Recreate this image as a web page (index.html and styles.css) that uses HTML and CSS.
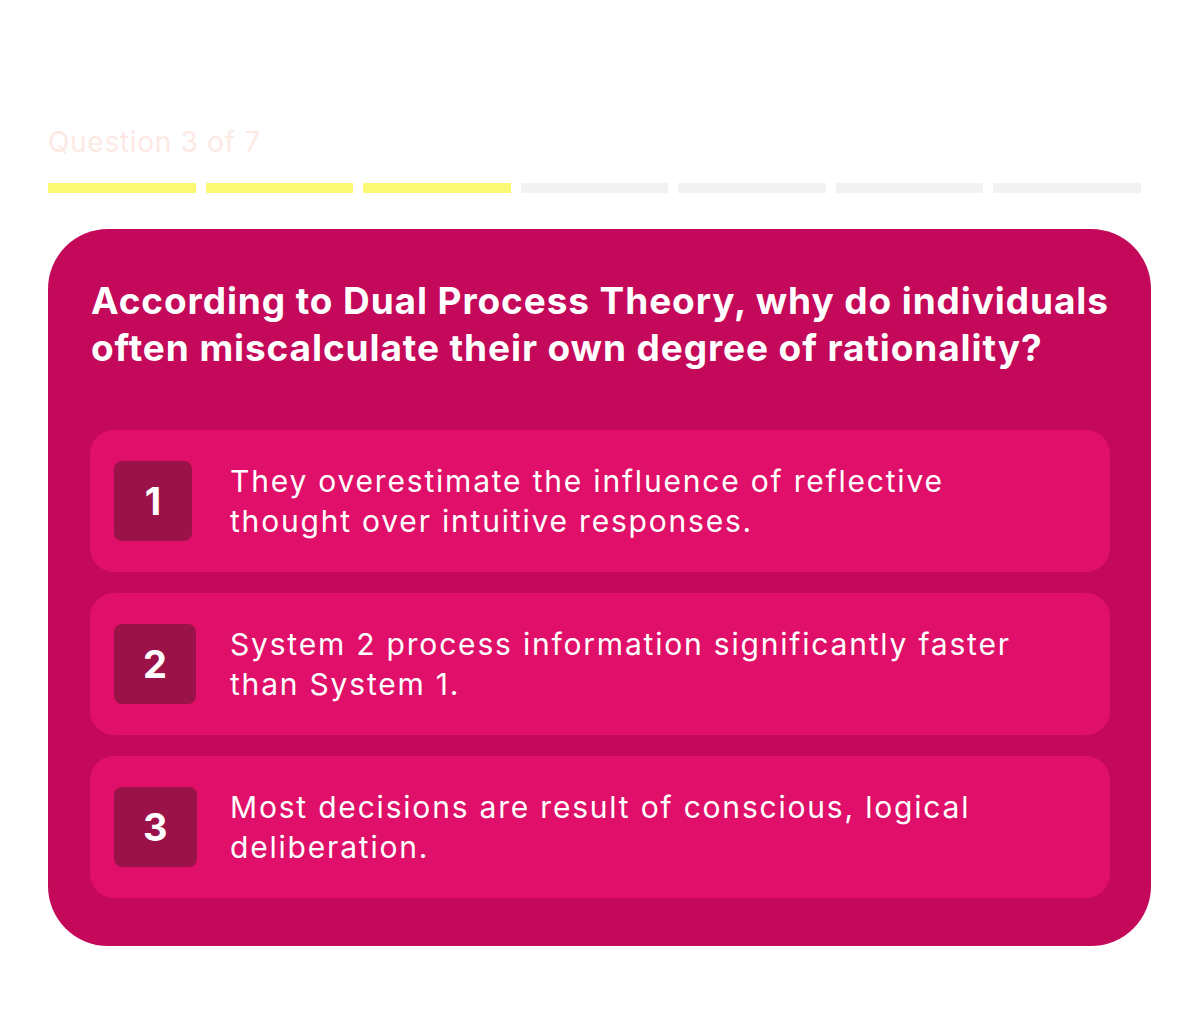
FILE: index.html
```html
<!DOCTYPE html>
<html lang="en">
<head>
<meta charset="utf-8">
<title>Quiz – Question 3 of 7</title>
<link rel="stylesheet" href="styles.css">
</head>
<body>
<main class="quiz">
  <p class="quiz-step">Question 3 of 7</p>
  <div class="progress">
    <span class="progress-seg is-done"></span>
    <span class="progress-seg is-done"></span>
    <span class="progress-seg is-done"></span>
    <span class="progress-seg"></span>
    <span class="progress-seg"></span>
    <span class="progress-seg"></span>
    <span class="progress-seg"></span>
  </div>
  <section class="card">
    <h1 class="question">According to Dual Process Theory, why do individuals often miscalculate their own degree of rationality?</h1>
    <ul class="options">
      <li class="option">
        <span class="option-num">1</span>
        <span class="option-text">They overestimate the influence of reflective thought over intuitive responses.</span>
      </li>
      <li class="option">
        <span class="option-num">2</span>
        <span class="option-text">System 2 process information significantly faster than System 1.</span>
      </li>
      <li class="option">
        <span class="option-num">3</span>
        <span class="option-text">Most decisions are result of conscious, logical deliberation.</span>
      </li>
    </ul>
  </section>
</main>
</body>
</html>
```

FILE: styles.css
```css
* {
  box-sizing: border-box;
}

html, body {
  margin: 0;
  padding: 0;
  background: #ffffff;
}

body {
  font-family: Inter, "Noto Sans", "Liberation Sans", sans-serif;
  color: #ffffff;
}

.quiz {
  padding: 122px 49px 0 48px;
  width: 1200px;
}

.quiz-step {
  margin: 0;
  font-size: 28px;
  line-height: 40px;
  font-weight: 400;
  letter-spacing: 0.7px;
  color: #fde9e4;
}

.progress {
  display: grid;
  grid-template-columns: repeat(7, 1fr);
  gap: 10px;
  width: 1093px;
  margin-top: 21px;
}

.progress-seg {
  display: block;
  height: 10px;
  background: #f2f2f2;
}

.progress-seg.is-done {
  background: #fbf973;
}

.card {
  margin-top: 36px;
  background: #c4085a;
  border-radius: 60px;
  padding: 48px 41px 48px 42px;
}

.question {
  margin: 0 0 59px 1px;
  font-size: 37px;
  line-height: 47px;
  font-weight: 700;
  letter-spacing: 0.9px;
}

.options {
  list-style: none;
  margin: 0;
  padding: 0;
  display: flex;
  flex-direction: column;
  gap: 21px;
}

.option {
  display: grid;
  grid-template-columns: 92px 1fr;
  column-gap: 24px;
  align-items: center;
  background: #e00f6a;
  border-radius: 24px;
  padding: 31px 24px;
  min-height: 142px;
}

.option-num {
  justify-self: start;
  display: flex;
  align-items: center;
  justify-content: center;
  min-width: 78px;
  height: 80px;
  padding: 0 29px;
  background: #9b1249;
  border-radius: 8px;
  font-size: 38px;
  font-weight: 700;
}

.option-text {
  max-width: 810px;
  font-size: 30px;
  line-height: 40px;
  font-weight: 400;
  letter-spacing: 1.8px;
}
```
